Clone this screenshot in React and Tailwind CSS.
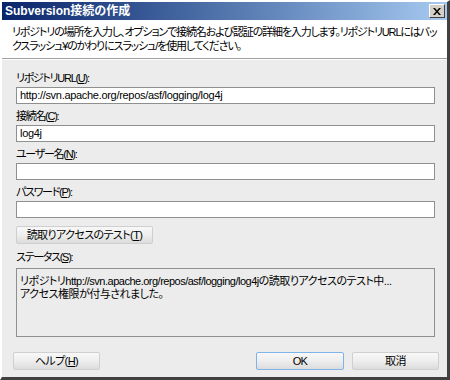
import React from 'react';

const font = "font-['Liberation_Sans','Noto_Sans_CJK_JP',sans-serif] [font-feature-settings:'palt']";

function Field({ label, mnemonic, rest, value }) {
  return (
    <div className="flex flex-col">
      <div className="h-[14px] text-[11px] leading-[14px] tracking-[-1.3px] text-black">
        {label}(<span className="underline">{mnemonic}</span>){rest}
      </div>
      <div className="mt-[2px] flex h-[17px] items-center border border-[#8e8f8f] bg-white px-[3px] text-[11px] tracking-[-0.3px] text-black">
        {value}
      </div>
    </div>
  );
}

function Btn({ children, className = '', primary }) {
  return (
    <div
      className={
        'flex h-[18px] items-center justify-center rounded-[2px] border bg-gradient-to-b from-[#f8f8f8] via-[#eeeeee] to-[#dcdcdc] text-[11px] tracking-[-0.6px] text-black ' +
        (primary ? 'border-[#7eb4ea] ' : 'border-[#cfcfcf] ') +
        className
      }
    >
      {children}
    </div>
  );
}

export default function App() {
  return (
    <div className={`${font} h-[380px] w-[450px] overflow-hidden bg-[#d4d0c8]`}>
      <div className="flex h-full flex-col border-l-2 border-t-2 border-r-[3px] border-b-[3px] border-l-white border-t-white border-r-[#404040] border-b-[#404040]">
        {/* title bar */}
        <div className="flex h-[18px] items-center justify-between bg-gradient-to-r from-[#0a246a] to-[#a6caf0] pl-[3px] pr-[2px]">
          <span className="text-[12px] font-bold leading-none text-white">Subversion接続の作成</span>
          <div className="flex h-[14px] w-[16px] items-center justify-center border border-t-white border-l-white border-r-[#404040] border-b-[#404040] bg-[#d4d0c8]">
            <svg width="8" height="7" viewBox="0 0 8 7">
              <path d="M0 0h2l2 2.5L6 0h2L5 3.5 8 7H6L4 4.5 2 7H0l3-3.5z" fill="#000" />
            </svg>
          </div>
        </div>

        {/* header */}
        <div className="h-[38px] bg-white px-[10px] pt-[5px] text-[11px] leading-[14px] tracking-[-1.15px] text-black">
          <div className="whitespace-nowrap">
            リポジトリの場所を入力し、オプションで接続名および認証の詳細を入力します。リポジトリURLにはバッ
          </div>
          <div className="whitespace-nowrap">クスラッシュ¥のかわりにスラッシュ/を使用してください。</div>
        </div>
        <div className="h-px bg-[#a0a0a0]" />
        <div className="h-px bg-white" />

        {/* body */}
        <div className="flex flex-1 flex-col bg-[#ececec] pl-[14px] pr-[12px] pt-[11px]">
          <div className="flex flex-col gap-[5px]">
            <Field label="リポジトリURL" mnemonic="U" rest=":" value="http://svn.apache.org/repos/asf/logging/log4j" />
            <Field label="接続名" mnemonic="C" rest=":" value="log4j" />
            <Field label="ユーザー名" mnemonic="N" rest=":" value="" />
            <Field label="パスワード" mnemonic="P" rest=":" value="" />
          </div>

          <Btn className="mt-[8px] w-[137px]">
            読取りアクセスのテスト(<span className="underline">T</span>)
          </Btn>

          <div className="mt-[6px] h-[14px] text-[11px] leading-[14px] tracking-[-1.3px] text-black">
            ステータス(<span className="underline">S</span>):
          </div>
          <div className="mt-[4px] h-[69px] border border-[#8e8f8f] px-[3px] pt-[6px] text-[11px] leading-[13px] tracking-[-0.5px] text-black">
            <div className="whitespace-nowrap">
              リポジトリhttp://svn.apache.org/repos/asf/logging/log4jの読取りアクセスのテスト中...
            </div>
            <div>アクセス権限が付与されました。</div>
          </div>

          <div className="mt-[15px] flex items-center">
            <Btn className="-ml-[3px] w-[87px]">
              ヘルプ(<span className="underline">H</span>)
            </Btn>
            <div className="flex-1" />
            <Btn primary className="w-[88px]">
              OK
            </Btn>
            <Btn className="ml-[8px] mr-[-4px] w-[87px]">取消</Btn>
          </div>
        </div>
      </div>
    </div>
  );
}
